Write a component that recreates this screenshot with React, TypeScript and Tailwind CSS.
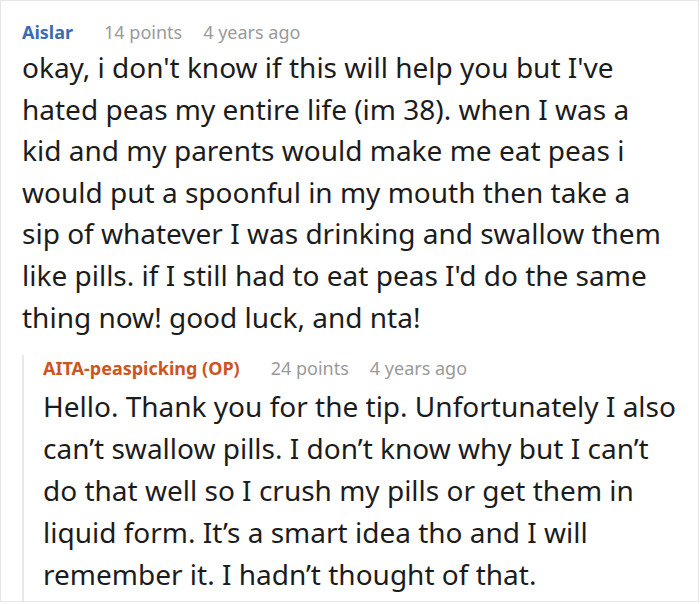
import React from "react";

type Comment = {
  author: string;
  op?: boolean;
  points: number;
  age: string;
  lines: string[];
};

const comment: Comment = {
  author: "Aislar",
  points: 14,
  age: "4 years ago",
  lines: [
    "okay, i don't know if this will help you but I've",
    "hated peas my entire life (im 38). when I was a",
    "kid and my parents would make me eat peas i",
    "would put a spoonful in my mouth then take a",
    "sip of whatever I was drinking and swallow them",
    "like pills. if I still had to eat peas I'd do the same",
    "thing now! good luck, and nta!",
  ],
};

const reply: Comment = {
  author: "AITA-peaspicking (OP)",
  op: true,
  points: 24,
  age: "4 years ago",
  lines: [
    "Hello. Thank you for the tip. Unfortunately I also",
    "can\u2019t swallow pills. I don\u2019t know why but I can\u2019t",
    "do that well so I crush my pills or get them in",
    "liquid form. It\u2019s a smart idea tho and I will",
    "remember it. I hadn\u2019t thought of that.",
  ],
};

function CommentHeader({ c }: { c: Comment }) {
  return (
    <div className="flex items-baseline text-[18px] leading-[26px]">
      <span
        className={
          c.op ? "font-bold text-[#cc5522]" : "font-bold text-[#3d6cb0]"
        }
      >
        {c.author}
      </span>
      <span className="ml-[31px] text-[#9a9a9a]">{c.points} points</span>
      <span className="ml-[21px] text-[#9a9a9a]">{c.age}</span>
    </div>
  );
}

function CommentBody({ lines, className }: { lines: string[]; className: string }) {
  return (
    <p className={"text-[28px] text-[#1c1c1c] whitespace-nowrap " + className}>
      {lines.map((l, i) => (
        <span key={i} className="block">
          {l}
        </span>
      ))}
    </p>
  );
}

export default function App() {
  return (
    <div
      className="w-[700px] h-[604px] bg-white overflow-hidden"
      style={{ fontFamily: '"Noto Sans", sans-serif' }}
    >
      <div className="w-[699px] h-[602px] border border-[#e6e6e6] pl-[21px] pt-[18px]">
        <CommentHeader c={comment} />
        <CommentBody lines={comment.lines} className="mt-[2px] leading-[41.6px]" />
        <div className="mt-[17px] border-l-2 border-[#e8e8e8] pl-[19px] pb-[6px]">
          <CommentHeader c={reply} />
          <CommentBody lines={reply.lines} className="mt-[4px] leading-[42px]" />
        </div>
      </div>
    </div>
  );
}
